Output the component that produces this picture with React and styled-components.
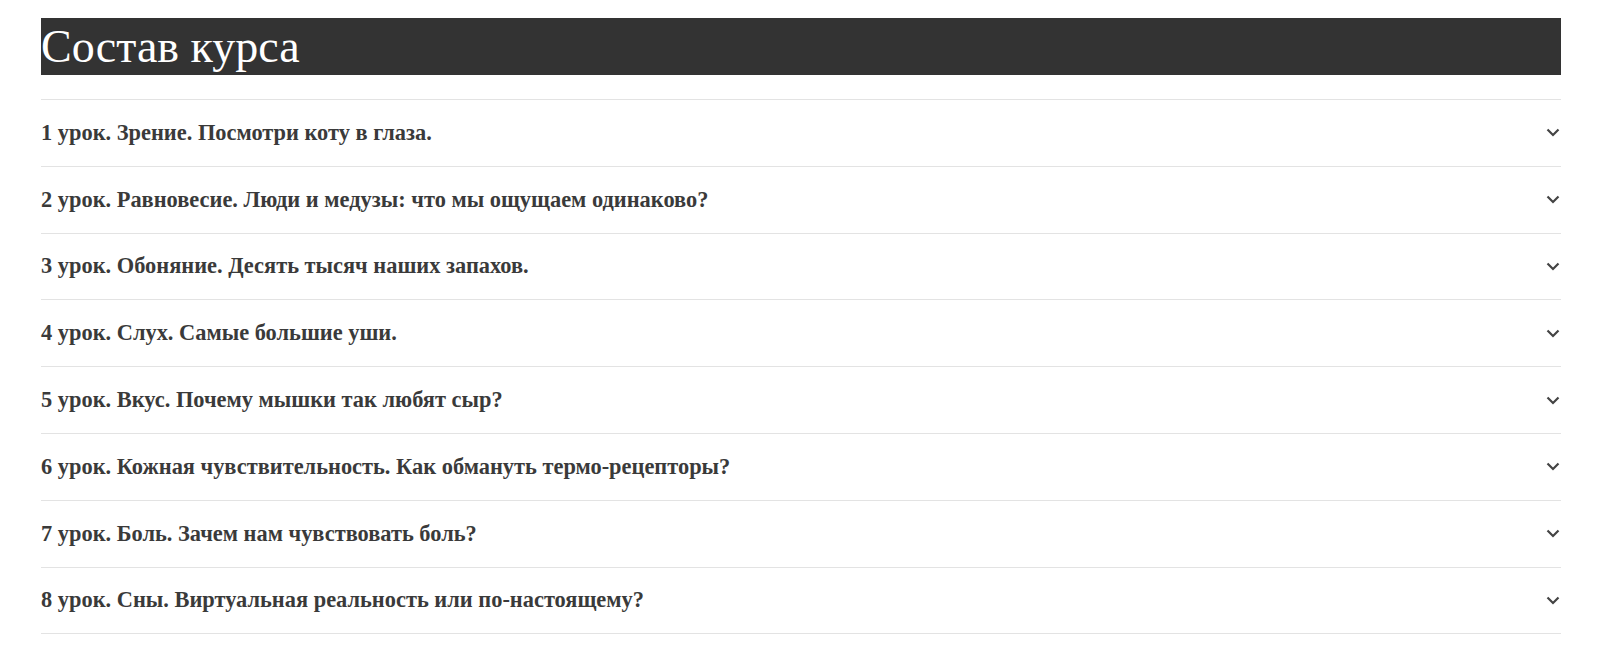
import styled, { createGlobalStyle } from "styled-components";

const lessons = [
  "1 урок. Зрение. Посмотри коту в глаза.",
  "2 урок. Равновесие. Люди и медузы: что мы ощущаем одинаково?",
  "3 урок. Обоняние. Десять тысяч наших запахов.",
  "4 урок. Слух. Самые большие уши.",
  "5 урок. Вкус. Почему мышки так любят сыр?",
  "6 урок. Кожная чувствительность. Как обмануть термо-рецепторы?",
  "7 урок. Боль. Зачем нам чувствовать боль?",
  "8 урок. Сны. Виртуальная реальность или по-настоящему?",
];

function Chevron() {
  return (
    <svg width="14" height="9" viewBox="0 0 14 9" fill="none">
      <path d="M1.5 1.5 L7 7 L12.5 1.5" stroke="#444" strokeWidth="2.2" />
    </svg>
  );
}

function App() {
  return (
    <>
      <GlobalStyle />
      <Section>
        <Title>Состав курса</Title>
        <List>
          {lessons.map((lesson) => (
            <Row key={lesson}>
              <RowTitle>{lesson}</RowTitle>
              <Chevron />
            </Row>
          ))}
        </List>
      </Section>
    </>
  );
}

const GlobalStyle = createGlobalStyle`
  body {
    margin: 0;
    background: #fff;
    font-family: "Liberation Serif", "Times New Roman", serif;
  }
`;

const Section = styled.section`
  margin: 0 37px 0 41px;
  padding-top: 18px;
`;

const Title = styled.h2`
  margin: 0 0 24px;
  background-color: #333333;
  color: #ffffff;
  font-weight: normal;
  font-size: 46px;
  line-height: 57px;
`;

const List = styled.div`
  border-top: 1px solid #e3e3e3;
`;

const Row = styled.div`
  display: flex;
  align-items: center;
  justify-content: space-between;
  height: 65.8px;
  padding: 0 1px 0 0;
  border-bottom: 1px solid #e3e3e3;
  cursor: pointer;
`;

const RowTitle = styled.span`
  font-size: 22.4px;
  line-height: 26px;
  font-weight: bold;
  color: #3a3a3a;
`;

export default App;
